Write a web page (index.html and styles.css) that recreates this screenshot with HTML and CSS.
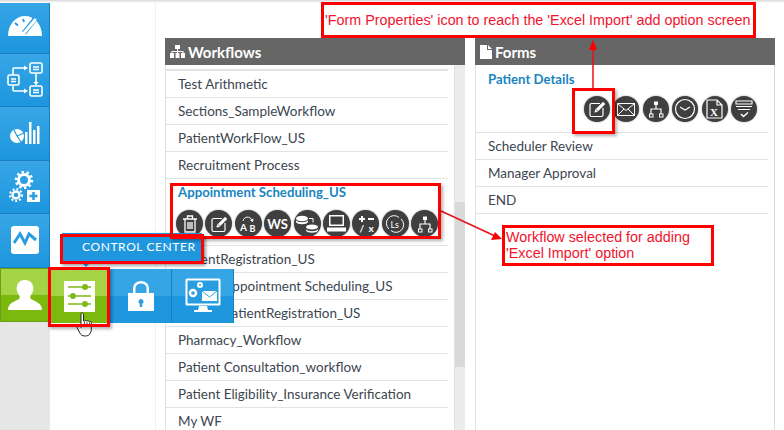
FILE: index.html
```html
<!DOCTYPE html>
<html>
<head>
  <title>Control Center</title>
  <link rel="stylesheet" href="styles.css">
</head>
<body>
<svg class="defs" width="0" height="0">
  <symbol id="i-edit" viewBox="0 0 26 26">
    <path d="M16 7.500H7.500A1.500 1.500 0 0 0 6 9v10a1.500 1.500 0 0 0 1.500 1.500h10A1.500 1.500 0 0 0 19 19v-7" fill="none" stroke="#fff" stroke-width="1.200"/>
    <path d="M10.500 16.500l.6-2.800 8-8 2.200 2.200-8 8z" fill="#fff"/>
    <path d="M12 13.500l2 2" stroke="#3f3f3f" stroke-width=".8"/>
  </symbol>
  <symbol id="i-org" viewBox="0 0 26 26">
    <path d="M13 9v4M8 18v-5h10v5" fill="none" stroke="#fff" stroke-width="1.200"/>
    <rect x="11" y="5.500" width="4" height="3.500" fill="#fff"/>
    <rect x="6.500" y="18" width="3.500" height="3" fill="none" stroke="#fff"/>
    <rect x="16.500" y="18" width="3.500" height="3" fill="none" stroke="#fff"/>
  </symbol>
</svg>

<div class="page">
  <div class="sidebar">
    <div class="side-item">
      <svg width="34" height="20" viewBox="0 0 34 20"><path d="M0 20C0 8 8 0 17 0s17 8 17 20z" fill="#fff"/><path d="M27 3L16 17" stroke="#2a9de0" stroke-width="5"/><path d="M27 4L16 17" stroke="#fff" stroke-width="3" stroke-linecap="round"/><path d="M7 7l3 2.500M15 3l1 3" stroke="#2a9de0" stroke-width="2"/></svg>
    </div>
    <div class="side-item">
      <svg width="36" height="36" viewBox="0 0 36 36" fill="none" stroke="#fff" stroke-width="1.600"><rect x="23" y="1" width="12" height="10" rx="1.500"/><rect x="23" y="24" width="12" height="10" rx="1.500"/><rect x="1" y="13" width="11" height="10" rx="1.500"/><path d="M26 5h6M26 7.500h6M26 28h6M26 30.500h6M4 17h5M4 19.500h5"/><path d="M6 13V7a1 1 0 0 1 1-1h11M6 23v5a1 1 0 0 0 1 1h11M29 11v10"/><path d="M17 3.500l4 2.500-4 2.500zM17 26.500l4 2.500-4 2.500zM26.500 20l2.500 3.500 2.500-3.500z" fill="#fff" stroke="none"/></svg>
    </div>
    <div class="side-item">
      <svg width="30" height="22" viewBox="0 0 30 22" fill="#fff"><circle cx="7" cy="14" r="7"/><path d="M7 14l7-3M7 14l-3-6M7 14l4 6" stroke="#2a9de0" stroke-width="1.200"/><rect x="15" y="10" width="2.500" height="12"/><rect x="19" y="0" width="2.500" height="22"/><rect x="23" y="8" width="2.500" height="14"/><rect x="27" y="4" width="2.500" height="18"/></svg>
    </div>
    <div class="side-item">
      <svg width="32" height="32" viewBox="0 0 32 32"><g fill="none" stroke="#fff"><circle cx="15" cy="9" r="5.500" stroke-width="3"/><circle cx="15" cy="9" r="8" stroke-width="2.500" stroke-dasharray="2.500 2.500"/><circle cx="7" cy="24" r="3.500" stroke-width="2.500"/><circle cx="7" cy="24" r="6" stroke-width="2" stroke-dasharray="2 2"/></g><rect x="18" y="19" width="13" height="12" fill="#fff"/><path d="M24.500 21v8M20.500 25h8" stroke="#2a9de0" stroke-width="2.500"/></svg>
    </div>
    <div class="side-item">
      <svg width="28" height="28" viewBox="0 0 28 28"><rect width="28" height="28" rx="3" fill="#fff"/><path d="M3 17l6-9 5 9 4-9 7 6" fill="none" stroke="#2a9de0" stroke-width="3"/></svg>
    </div>
    <div class="side-item side-active">
      <svg width="34" height="32" viewBox="0 0 34 32" fill="#fff"><path d="M0 31c0-7 6-8 11-11 1-1 1-3 0-4-2-3-3-6-2-9 1-4 4-6 8-6s7 2 8 6c1 3 0 6-2 9-1 1-1 3 0 4 5 3 11 4 11 11z"/></svg>
    </div>
    <div class="side-rest"></div>
  </div>

  <div class="main">
    <div class="panel panel-workflows">
      <div class="panel-heading">
        <svg width="15" height="13" viewBox="0 0 15 13" fill="#fff"><rect x="5" y="0" width="5" height="4"/><rect x="0" y="8" width="4" height="5"/><rect x="5.500" y="8" width="4" height="5"/><rect x="11" y="8" width="4" height="5"/><path d="M7 4h1v2h5.500v2h-1V7h-4.500v1H7V7H2.500v1h-1V6H7z"/></svg>
        Workflows
      </div>
      <div class="panel-body">
        <ul class="rows">
          <li class="row row-cut"></li>
          <li class="row">Test Arithmetic</li>
          <li class="row">Sections_SampleWorkflow</li>
          <li class="row">PatientWorkFlow_US</li>
          <li class="row">Recruitment Process</li>
          <li class="row row-open">
            <a class="row-link">Appointment Scheduling_US</a>
            <div class="tools">
              <span class="tool"><svg width="18" height="20" viewBox="0 0 18 20" fill="none" stroke="#fff" stroke-width="1.300"><path d="M2 5h14M6.500 5V2h5v3M4 5v13h10V5M7 8v7M9 8v7M11 8v7"/></svg></span>
              <span class="tool"><svg width="26" height="26"><use href="#i-edit"/></svg></span>
              <span class="tool"><svg width="22" height="20" viewBox="0 0 22 20"><path d="M6 7C7 2 13 2 15 6" fill="none" stroke="#fff"/><path d="M16.500 4.500l-.5 3.500-3-1.500z" fill="#fff"/><text class="glyph" x="3" y="17" font-size="10">A</text><text class="glyph" x="12.500" y="18" font-size="9">B</text></svg></span>
              <span class="tool tool-text">WS</span>
              <span class="tool"><svg width="22" height="18" viewBox="0 0 22 18" fill="#fff"><ellipse cx="6" cy="3.500" rx="6" ry="2.800"/><ellipse cx="16" cy="12" rx="6" ry="2.500"/><path d="M0 5c1 3 11 3 12 0v2c-1 3-11 3-12 0zM10 14c1 3 11 3 12 0v1.500c-1 3-11 3-12 0z"/><path d="M13 3.500h4v4" fill="none" stroke="#fff"/></svg></span>
              <span class="tool"><svg width="19" height="17" viewBox="0 0 19 17" fill="#fff"><path d="M2 0h15v11H2zM3.500 1.500v8h12v-8z" fill-rule="evenodd"/><rect x="0" y="12.500" width="19" height="4"/></svg></span>
              <span class="tool"><svg width="20" height="20" viewBox="0 0 20 20"><path d="M3 5h6M6 2v6M12 5h6" stroke="#fff" stroke-width="2"/><text class="glyph" x="3.500" y="18" font-size="10">/</text><text class="glyph" x="12.500" y="18" font-size="10">x</text></svg></span>
              <span class="tool"><svg width="20" height="20" viewBox="0 0 20 20" fill="none" stroke="#fff"><path d="M4 15A7.500 7.500 0 0 1 14 3.500M16 5A7.500 7.500 0 0 1 6 16.500"/><text class="glyph glyph-thin" x="5.500" y="13.500" font-size="9" stroke="none">Ls</text></svg></span>
              <span class="tool"><svg width="26" height="26"><use href="#i-org"/></svg></span>
            </div>
          </li>
          <li class="row">PatientRegistration_US</li>
          <li class="row">Patient Appointment Scheduling_US</li>
          <li class="row">Patient PatientRegistration_US</li>
          <li class="row">Pharmacy_Workflow</li>
          <li class="row">Patient Consultation_workflow</li>
          <li class="row">Patient Eligibility_Insurance Verification</li>
          <li class="row">My WF</li>
        </ul>
        <div class="scrollbar"><div class="scroll-thumb"></div></div>
      </div>
    </div>

    <div class="panel panel-forms">
      <div class="panel-heading">
        <svg width="12" height="14" viewBox="0 0 12 14" fill="#fff"><path d="M0 0h7v5h5v9H0zM8 0l4 4H8z"/></svg>
        Forms
      </div>
      <div class="panel-body">
        <ul class="rows">
          <li class="row row-open row-form">
            <a class="row-link">Patient Details</a>
            <div class="tools tools-right">
              <span class="tool"><svg width="26" height="26"><use href="#i-edit"/></svg></span>
              <span class="tool"><svg width="18" height="13" viewBox="0 0 18 13" fill="none" stroke="#fff"><rect x="0.500" y="0.500" width="17" height="12"/><path d="M1 1l8 6.500L17 1M1 12l6-6M17 12l-6-6"/></svg></span>
              <span class="tool"><svg width="26" height="26"><use href="#i-org"/></svg></span>
              <span class="tool"><svg width="22" height="22" viewBox="0 0 22 22" fill="none" stroke="#fff" stroke-width="1.200"><circle cx="11" cy="11" r="9.500"/><path d="M6 9l5 3 5-3"/></svg></span>
              <span class="tool"><svg width="17" height="20" viewBox="0 0 17 20" fill="none" stroke="#fff" stroke-width="1.200"><path d="M1 1h10l5 5v13H1zM11 1v5h5"/><text class="glyph glyph-serif" x="4" y="17" font-size="11" stroke="none">X</text></svg></span>
              <span class="tool"><svg width="18" height="18" viewBox="0 0 18 18" fill="none" stroke="#fff" stroke-width="1.100"><path d="M1 1h16v3H1zM1 6.500h16M3 9.500h12"/><path d="M6 14l2.500 2.500L13 12.500" stroke-width="1.500"/></svg></span>
            </div>
          </li>
          <li class="row">Scheduler Review</li>
          <li class="row">Manager Approval</li>
          <li class="row">END</li>
        </ul>
      </div>
    </div>
  </div>

  <div class="flyout">
    <div class="fly-item fly-green">
      <svg width="31" height="31" viewBox="0 0 31 31"><rect width="31" height="31" fill="#fff"/><g stroke="#7fb91a" stroke-width="1.500"><path d="M4 6h23M4 15h23M4 23h23"/></g><g fill="#7fb91a"><circle cx="21" cy="6" r="3"/><circle cx="9" cy="15" r="3"/><circle cx="21" cy="23" r="3"/></g></svg>
    </div>
    <div class="fly-item">
      <svg width="26" height="30" viewBox="0 0 26 30" fill="#fff"><path d="M5 14V7a8 7 0 0 1 16 0v7h-2.500V7a5.500 4.500 0 0 0-11 0v7z"/><path d="M0 12h26v18H0z"/><path d="M13 18a2.500 2.500 0 0 1 1.200 4.700V26h-2.400v-3.300A2.500 2.500 0 0 1 13 18z" fill="#2a9de0"/></svg>
    </div>
    <div class="fly-item">
      <svg width="36" height="36" viewBox="0 0 36 36"><rect x="0.500" y="0.500" width="35" height="27" rx="1.500" fill="#fff"/><rect x="2.500" y="2.500" width="31" height="23" fill="#2a9de0"/><path d="M14 28h8l1 4h-10zM9 32h18v2H9z" fill="#fff"/><rect x="17" y="13" width="15" height="10" fill="#fff"/><path d="M17 13l7.500 6 7.500-6" fill="none" stroke="#2a9de0"/><circle cx="8" cy="15" r="3" fill="none" stroke="#fff" stroke-width="2.500"/><circle cx="15" cy="7" r="2" fill="none" stroke="#fff" stroke-width="2"/></svg>
    </div>
  </div>

  <div class="tip">CONTROL CENTER</div>

  <svg class="cursor" width="20" height="26" viewBox="0 0 20 26"><path d="M5 1.500c1-1 2.500-.5 2.500 1V9l1 .2c.5-1 2-1 2.300 0 .7-.8 2-.6 2.300.4.800-.6 2.200-.2 2.200 1V17c0 4-2 7-6 7-3 0-4.500-1-6-4l-2.500-5c-.5-1.500 1-2.500 2.200-1.500l2 2z" fill="#fff" stroke="#222" stroke-width="1"/><path d="M8.500 10v5M11 10v5M13.500 10.500V15" stroke="#222" stroke-width=".8"/></svg>

  <svg class="arrows" width="784" height="430" viewBox="0 0 784 430">
    <path d="M593 88V48" stroke="#e8101c" stroke-width="1.500"/>
    <path d="M593 40l-4 10h8z" fill="#f00"/>
    <path d="M441 211l54 25" stroke="#e8101c" stroke-width="1.500"/>
    <path d="M502 239l-11 1 4-8z" fill="#f00"/>
  </svg>

  <div class="mark mark-top">'Form Properties' icon to reach the 'Excel Import' add option screen</div>
  <div class="mark mark-note">Workflow selected for adding<br>'Excel Import' option</div>
  <div class="mark mark-row"></div>
  <div class="mark mark-icon"></div>
  <div class="mark mark-tip"></div>
  <div class="mark mark-green"></div>
</div>
</body>
</html>
```

FILE: styles.css
```css
html, body {
  margin: 0;
  padding: 0;
  background: #fff;
}
.defs {
  display: none;
}
.page {
  position: relative;
  display: flex;
  width: 784px;
  height: 430px;
  overflow: hidden;
  font-family: "Lato", "Liberation Sans", sans-serif;
  font-size: 13.500px;
  color: #3c4650;
}
.page:before {
  content: "";
  position: absolute;
  left: 0;
  right: 0;
  top: 0;
  height: 3px;
  background: linear-gradient(#d8d8d8, #fff);
}

/* left bar */
.sidebar {
  display: flex;
  flex-direction: column;
  flex: none;
  width: 50px;
}
.side-item {
  display: flex;
  flex: none;
  align-items: center;
  justify-content: center;
  height: 53.500px;
  box-sizing: border-box;
  border-right: 1px solid #1a7fba;
  border-bottom: 1px solid #1a7fba;
  background: linear-gradient(#38a6e6, #1d96de);
}
.side-active {
  height: 54px;
  border: 1px solid #6c9e18;
  background: linear-gradient(#a4d345 50%, #7cb90f 50%);
}
.side-rest {
  flex: 1;
  background: #e6e6e6;
}

/* panels */
.main {
  display: flex;
  flex: 1;
  gap: 10px;
  margin-left: 105px;
  padding: 38px 0 0 9px;
  border-left: 1px solid #f0f0f0;
}
.panel {
  display: flex;
  flex-direction: column;
  width: 300px;
}
.panel-heading {
  display: flex;
  flex: none;
  align-items: center;
  gap: 3px;
  height: 27px;
  padding-left: 5px;
  background: #666;
  color: #fff;
  font-size: 15px;
  font-weight: 700;
}
.panel-body {
  display: flex;
  flex: 1;
  border-left: 1px solid #e2e2e2;
}
.panel-forms .panel-body {
  border-right: 1px solid #dcdcdc;
}
.rows {
  flex: 1;
  margin: 0 6px 0 0;
  padding: 0;
  list-style: none;
}
.row {
  display: flex;
  align-items: center;
  box-sizing: border-box;
  height: 27px;
  padding: 0 0 1px 12px;
  border-bottom: 1px solid #e2e2e2;
  white-space: nowrap;
}
.row-cut {
  height: 6px;
  padding: 0;
  border-bottom-width: 2px;
}
.row-open {
  display: block;
  height: 67px;
  padding-top: 4px;
}
.row-form {
  height: 68px;
  padding-top: 5px;
}
.row-link {
  display: block;
  height: 20px;
  line-height: 18px;
  color: #1a84c0;
  font-size: 13.200px;
  font-weight: 700;
}
.tools {
  display: flex;
  gap: 2.400px;
  margin: 7px 0 0 -2px;
}
.tools-right {
  justify-content: flex-end;
  gap: 3.400px;
  margin: 6px 11px 0 0;
}
.tool {
  display: flex;
  flex: none;
  align-items: center;
  justify-content: center;
  width: 27px;
  height: 27px;
  border-radius: 50%;
  background: #3f3f3f;
  box-shadow: 0 0 2px rgba(0, 0, 0, 0.4);
}
.tools-right .tool {
  width: 26px;
  height: 26px;
}
.tool-text {
  color: #fff;
  font-size: 13px;
  font-weight: 700;
}
.glyph {
  fill: #fff;
  font-family: "Lato", sans-serif;
  font-weight: 700;
}
.glyph-thin {
  font-weight: 400;
}
.glyph-serif {
  font-family: "Liberation Serif", serif;
}
.scrollbar {
  flex: none;
  width: 10px;
  padding-top: 137px;
  border-left: 1px solid #e2e2e2;
  background: #ececec;
}
.scroll-thumb {
  height: 165px;
  background: #d9d9d9;
}

/* flyout menu */
.flyout {
  position: absolute;
  left: 49px;
  top: 269px;
  display: flex;
  height: 54px;
}
.fly-item {
  display: flex;
  align-items: center;
  justify-content: center;
  width: 61px;
  border-right: 1px solid #1a7fba;
  background: linear-gradient(#35a5e6 50%, #1f97df 50%);
}
.fly-green {
  border-right: 0;
  background: linear-gradient(#a4d345 50%, #7cb90f 50%);
}
.tip {
  position: absolute;
  left: 62px;
  top: 233px;
  width: 140px;
  height: 28px;
  padding-left: 20px;
  box-sizing: border-box;
  background: #1f97df;
  color: #fff;
  font-size: 12px;
  letter-spacing: 0.600px;
  line-height: 27px;
  white-space: nowrap;
  box-shadow: 2px 2px 4px rgba(0, 0, 0, 0.3);
}
.tip:after {
  content: "";
  position: absolute;
  left: 18px;
  top: 28px;
  border: 6px solid transparent;
  border-top-color: #1f97df;
}
.cursor {
  position: absolute;
  left: 76px;
  top: 312px;
}
.arrows {
  position: absolute;
  left: 0;
  top: 0;
}

/* red annotations */
.mark {
  position: absolute;
  box-sizing: border-box;
  border: 3px solid #f00;
  box-shadow: 2px 2px 3px rgba(0, 0, 0, 0.3);
  color: #f0142c;
  font-family: "Liberation Sans", sans-serif;
}
.mark-top {
  left: 321px;
  top: 2px;
  width: 435px;
  height: 36px;
  padding-left: 1px;
  background: #fff;
  box-shadow: none;
  font-size: 14.350px;
  line-height: 31px;
  white-space: nowrap;
}
.mark-note {
  left: 502px;
  top: 225px;
  width: 212px;
  height: 41px;
  padding: 1px 0 0 1px;
  background: #fff;
  box-shadow: none;
  font-size: 14.350px;
  line-height: 16px;
}
.mark-row {
  left: 170px;
  top: 183px;
  width: 271px;
  height: 56px;
}
.mark-icon {
  left: 572px;
  top: 88px;
  width: 43px;
  height: 46px;
}
.mark-tip {
  left: 60px;
  top: 234px;
  width: 144px;
  height: 30px;
}
.mark-green {
  left: 48px;
  top: 267px;
  width: 62px;
  height: 60px;
}
```
